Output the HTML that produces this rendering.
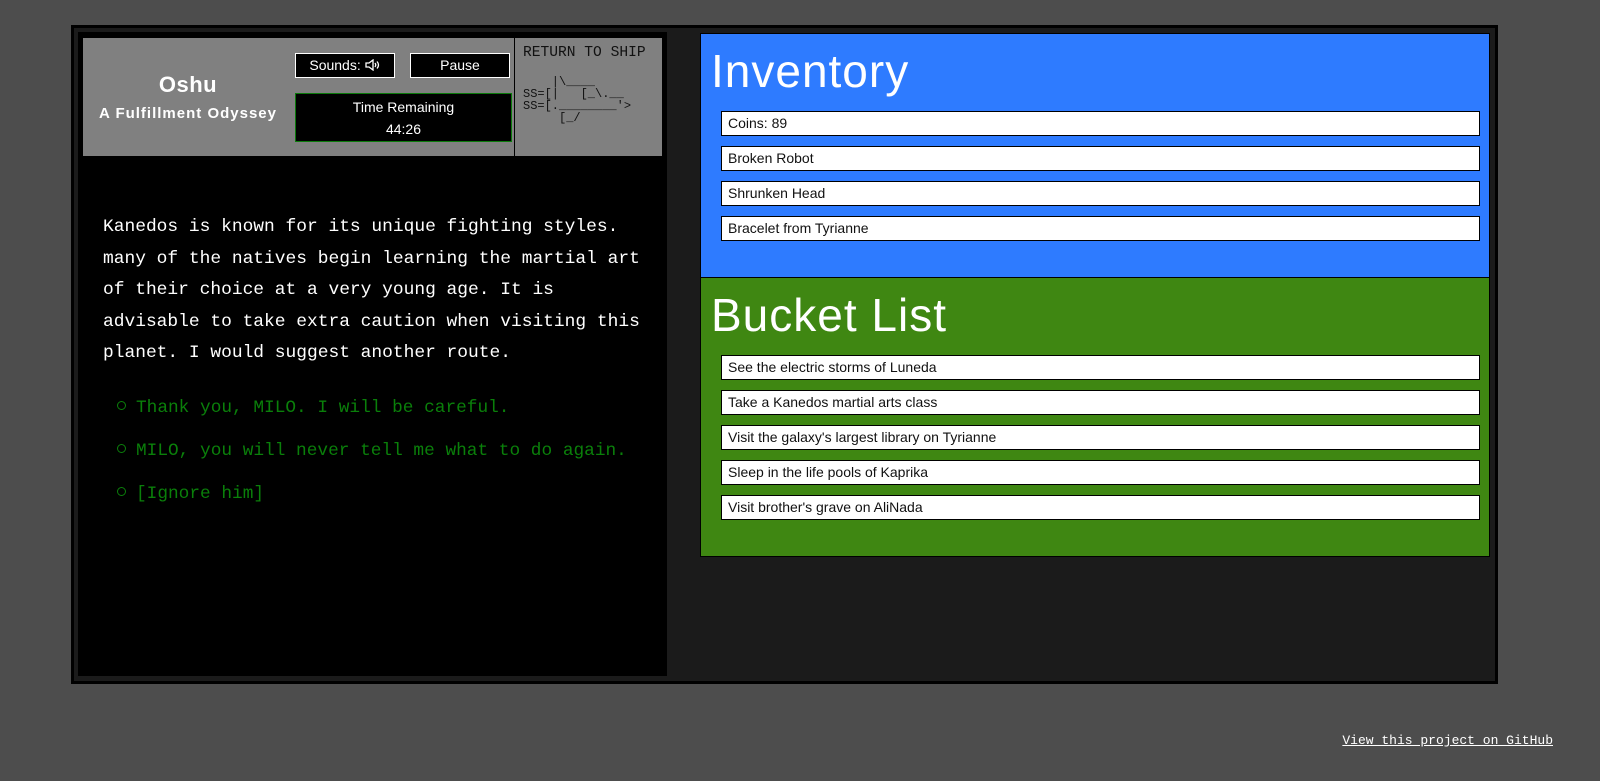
<!DOCTYPE html>
<html><head><meta charset="utf-8"><style>
*{box-sizing:border-box;margin:0;padding:0}
body{width:1600px;height:781px;background:#4d4d4d;position:relative;overflow:hidden;font-family:"Liberation Sans",sans-serif}
.outer{position:absolute;left:71px;top:25px;width:1427px;height:659px;border:3px solid #000;background:#1b1b1b}
.left{position:absolute;left:78px;top:32px;width:589px;height:644px;background:#000}
.hdr{position:absolute;left:83px;top:38px;width:579px;height:118px;background:#808080}
.title{position:absolute;left:83px;top:72px;width:210px;text-align:center;color:#fff;font-weight:bold}
.title .a{font-size:22px;letter-spacing:0.5px}
.title .b{font-size:15px;margin-top:7px;letter-spacing:1px}
.btn{position:absolute;background:#000;color:#fff;border:1px solid #fff;font-size:14px;text-align:center;line-height:22px}
.timer{position:absolute;left:295px;top:93px;width:217px;height:49px;background:#000;border:1px solid #0a7a0a;color:#fff;font-size:14px;text-align:center;line-height:22px;padding-top:2px}
.shipbox{position:absolute;left:514px;top:38px;width:148px;height:118px;border-left:1px solid #000}
.rts{position:absolute;left:523px;top:45px;font-family:"Liberation Mono",monospace;font-size:14.6px;color:#111}
.ship{position:absolute;left:523px;top:76px;font-family:"Liberation Mono",monospace;font-size:12px;color:#111;white-space:pre;line-height:12px}
.story{position:absolute;left:103px;top:212px;width:545px;color:#fff;font-family:"Liberation Mono",monospace;font-size:17.9px;line-height:31.5px}
.opts{position:absolute;left:117px;top:394px;color:#0a7f0a;font-family:"Liberation Mono",monospace;font-size:17.8px;list-style:none}
.opts li{height:43px;line-height:28px}
.opts li:before{content:"";display:inline-block;width:7px;height:7px;border:1px solid #0a7f0a;border-radius:50%;margin-right:10px;vertical-align:2px}
.panel{position:absolute;left:700px;width:790px;border:1px solid #000}
.panel h2{font-weight:normal;color:#fff;font-size:46px;position:absolute;left:10px;letter-spacing:1px}
.item{position:absolute;left:20px;width:759px;height:25px;background:#fff;border:1px solid #000;font-size:14px;color:#111;line-height:23px;padding-left:6px}
.gh{position:absolute;right:47px;top:733px;color:#fff;font-family:"Liberation Mono",monospace;font-size:13px;text-decoration:underline}
</style></head><body>
<div class="outer"></div>
<div class="left"></div>
<div class="hdr"></div>
<div class="title"><div class="a">Oshu</div><div class="b">A Fulfillment Odyssey</div></div>
<div class="btn" style="left:295px;top:53px;width:100px;height:25px">Sounds: <svg width="16" height="12" viewBox="0 0 16 12" style="vertical-align:-1px"><path d="M1 4h3l4-3v10l-4-3H1z" fill="none" stroke="#fff" stroke-width="1.3"/><path d="M10 4q1.5 2 0 4M12 2.5q3 3.5 0 7" fill="none" stroke="#fff" stroke-width="1.3"/></svg></div>
<div class="btn" style="left:410px;top:53px;width:100px;height:25px">Pause</div>
<div class="timer">Time Remaining<br>44:26</div>
<div class="shipbox"></div>
<div class="rts">RETURN TO SHIP</div>
<div class="ship">    |\____
SS=[|   [_\.__
SS=[.________'>
     [_/</div>
<div class="story">Kanedos is known for its unique fighting styles. many of the natives begin learning the martial art of their choice at a very young age. It is advisable to take extra caution when visiting this planet. I would suggest another route.</div>
<ul class="opts"><li>Thank you, MILO. I will be careful.</li><li>MILO, you will never tell me what to do again.</li><li>[Ignore him]</li></ul>
<div class="panel" style="top:33px;height:245px;background:#2e7bff">
<h2 style="top:10px">Inventory</h2>
<div class="item" style="top:77px">Coins: 89</div>
<div class="item" style="top:112px">Broken Robot</div>
<div class="item" style="top:147px">Shrunken Head</div>
<div class="item" style="top:182px">Bracelet from Tyrianne</div>
</div>
<div class="panel" style="top:277px;height:280px;background:#3f8712">
<h2 style="top:10px">Bucket List</h2>
<div class="item" style="top:77px">See the electric storms of Luneda</div>
<div class="item" style="top:112px">Take a Kanedos martial arts class</div>
<div class="item" style="top:147px">Visit the galaxy's largest library on Tyrianne</div>
<div class="item" style="top:182px">Sleep in the life pools of Kaprika</div>
<div class="item" style="top:217px">Visit brother's grave on AliNada</div>
</div>
<a class="gh">View this project on GitHub</a>
</body></html>
